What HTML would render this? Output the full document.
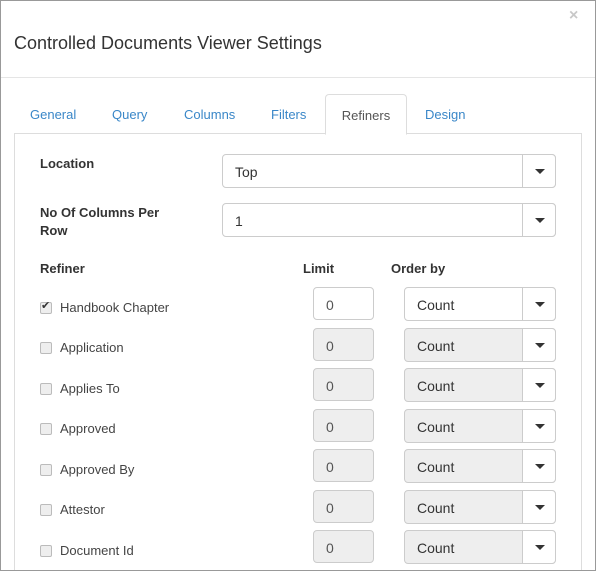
<!DOCTYPE html>
<html style="overflow:hidden"><head><style>
*{box-sizing:border-box;margin:0;padding:0}
html,body{width:596px;height:571px;overflow:hidden}
body{background:#fff;font-family:"Liberation Sans",sans-serif;color:#333;position:relative}
.a{position:absolute}
.frame{left:0;top:0;width:596px;height:571px;border:1px solid #999;z-index:5;pointer-events:none}
.hdr{left:1px;top:77px;width:594px;height:1px;background:#e5e5e5}
.title{left:14px;top:33px;font-size:18px;color:#333}
.close{left:569px;top:7px;font-size:16px;color:#c8c8c8;font-weight:bold}
.tab{top:107px;font-size:13px;color:#3a87c8}
.panel{left:14px;top:133px;width:568px;height:438px;border:1px solid #ddd}
.atab{left:325px;top:94px;width:82px;height:41px;border:1px solid #ddd;border-bottom:1px solid #fff;border-radius:4px 4px 0 0;background:#fff;color:#555;font-size:13px;padding-top:13px;text-align:center}
.lbl{font-size:13px;font-weight:bold;color:#333;line-height:18px}
.sel{height:34px;border:1px solid #ccc;border-radius:4px;background:#fff;font-size:14px;padding:9px 12px;color:#333}
.sel.d{background:#eee}
.btn{position:absolute;right:-1px;top:-1px;width:34px;height:34px;border:1px solid #ccc;border-radius:0 4px 4px 0;background:#fff}
.btn:after{content:"";position:absolute;left:12px;top:14px;border-left:5px solid transparent;border-right:5px solid transparent;border-top:5px solid #333}
.lim{width:61px;height:33px;border:1px solid #ccc;border-radius:4px;font-size:14px;padding:9px 12px;color:#555;background:#fff}
.lim.d{background:#eee}
.cb{width:12px;height:12px;border:1px solid #bbb;border-radius:2px;background:#eee}
.rl{font-size:13px;color:#444}
</style></head><body>
<div class="a frame"></div>
<div class="a title">Controlled Documents Viewer Settings</div>
<div class="a close">×</div>
<div class="a hdr"></div>
<div class="a panel"></div>
<div class="a tab" style="left:30px">General</div>
<div class="a tab" style="left:112px">Query</div>
<div class="a tab" style="left:184px">Columns</div>
<div class="a tab" style="left:271px">Filters</div>
<div class="a atab">Refiners</div>
<div class="a tab" style="left:425px">Design</div>

<div class="a lbl" style="left:40px;top:155px">Location</div>
<div class="a sel" style="left:222px;top:154px;width:334px">Top<div class="btn"></div></div>
<div class="a lbl" style="left:40px;top:204px;width:140px">No Of Columns Per Row</div>
<div class="a sel" style="left:222px;top:203px;width:334px">1<div class="btn"></div></div>

<div class="a lbl" style="left:40px;top:260px">Refiner</div>
<div class="a lbl" style="left:303px;top:260px">Limit</div>
<div class="a lbl" style="left:391px;top:260px">Order by</div>

<div class="a cb" style="left:40px;top:302px;background:#eee"></div>
<div class="a" style="left:41px;top:299px;font-size:11px;color:#333">✔</div>
<div class="a rl" style="left:60px;top:300px">Handbook Chapter</div>
<div class="a lim" style="left:313px;top:287px">0</div>
<div class="a sel" style="left:404px;top:287px;width:152px">Count<div class="btn"></div></div>

<div class="a cb" style="left:40px;top:342px"></div><div class="a rl" style="left:60px;top:340px">Application</div>
<div class="a lim d" style="left:313px;top:328px">0</div>
<div class="a sel d" style="left:404px;top:328px;width:152px">Count<div class="btn"></div></div>

<div class="a cb" style="left:40px;top:383px"></div><div class="a rl" style="left:60px;top:381px">Applies To</div>
<div class="a lim d" style="left:313px;top:368px">0</div>
<div class="a sel d" style="left:404px;top:368px;width:152px">Count<div class="btn"></div></div>

<div class="a cb" style="left:40px;top:423px"></div><div class="a rl" style="left:60px;top:421px">Approved</div>
<div class="a lim d" style="left:313px;top:409px">0</div>
<div class="a sel d" style="left:404px;top:409px;width:152px">Count<div class="btn"></div></div>

<div class="a cb" style="left:40px;top:464px"></div><div class="a rl" style="left:60px;top:462px">Approved By</div>
<div class="a lim d" style="left:313px;top:449px">0</div>
<div class="a sel d" style="left:404px;top:449px;width:152px">Count<div class="btn"></div></div>

<div class="a cb" style="left:40px;top:504px"></div><div class="a rl" style="left:60px;top:502px">Attestor</div>
<div class="a lim d" style="left:313px;top:490px">0</div>
<div class="a sel d" style="left:404px;top:490px;width:152px">Count<div class="btn"></div></div>

<div class="a cb" style="left:40px;top:545px"></div><div class="a rl" style="left:60px;top:543px">Document Id</div>
<div class="a lim d" style="left:313px;top:530px">0</div>
<div class="a sel d" style="left:404px;top:530px;width:152px">Count<div class="btn"></div></div>
</body></html>
